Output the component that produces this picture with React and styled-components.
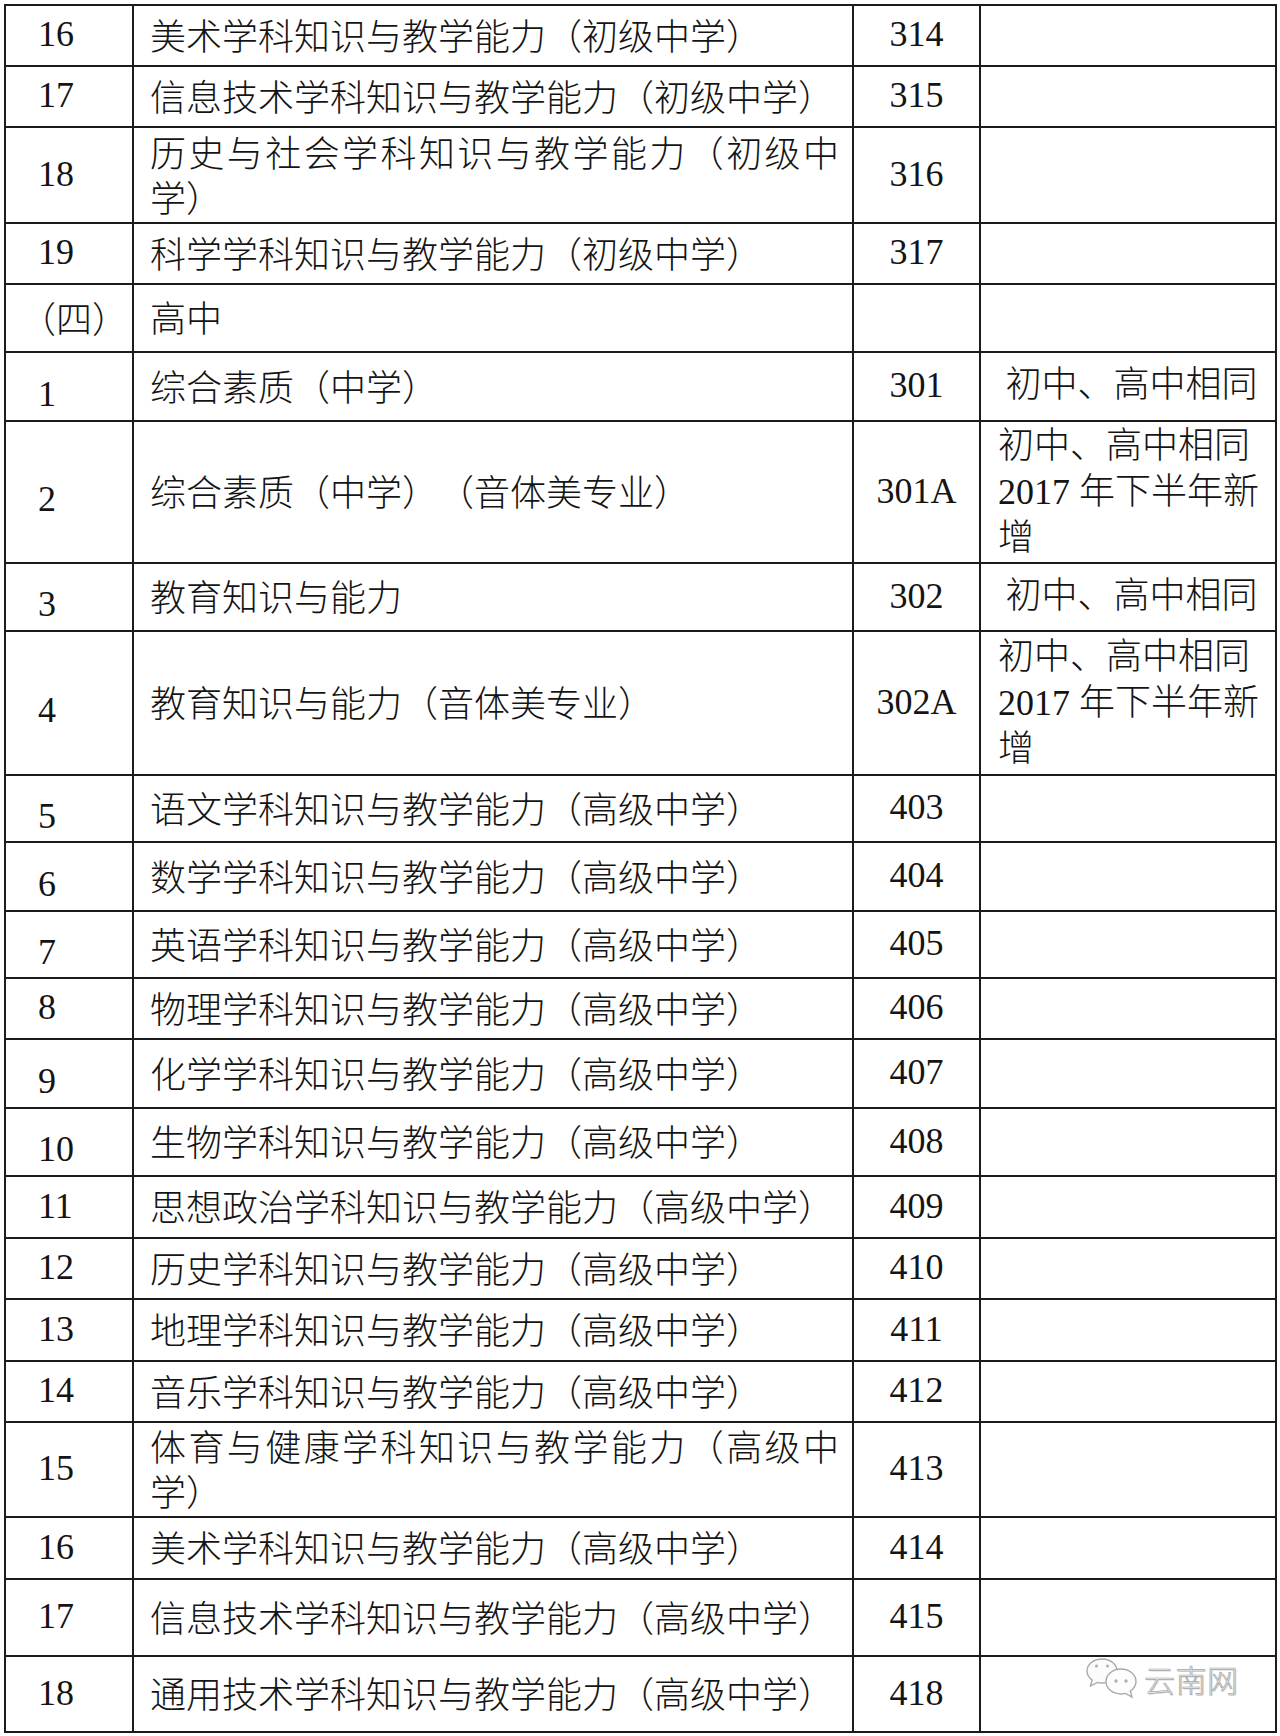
import React from 'react';
import styled, { createGlobalStyle } from 'styled-components';

const GlobalStyle = createGlobalStyle`
  html, body { margin: 0; padding: 0; background: #ffffff; }
  body { font-family: "Liberation Serif", "Noto Sans CJK SC", serif; }
`;

const Page = styled.div`
  position: relative;
  width: 1280px;
  height: 1736px;
  padding: 4px 0 0 4px;
  box-sizing: border-box;
  background: #ffffff;
  overflow: hidden;
`;

const Table = styled.table`
  border-collapse: collapse;
  table-layout: fixed;
  width: 1271px;
  font-family: "Liberation Serif", "Noto Sans CJK SC", serif;
  font-size: 36px;
  color: #141414;
  text-spacing-trim: space-all;
`;

const Col = styled.col`
  width: ${(p) => p.$w}px;
`;

const Row = styled.tr`
  height: ${(p) => p.$h}px;
`;

const Cell = styled.td`
  border: 2px solid #1c1c1c;
  padding: 0 0 3px 0;
  vertical-align: middle;
  line-height: 44px;
  box-sizing: border-box;
`;

const NumCell = styled(Cell)`
  padding-left: ${(p) => (p.$tight ? 14 : 32)}px;
  padding-top: ${(p) => (p.$drop ? 17 : 0)}px;
  white-space: nowrap;
  font-family: ${(p) => (p.$tight ? '"Noto Sans CJK SC", sans-serif' : '"Liberation Serif", serif')};
  font-weight: ${(p) => (p.$tight ? 300 : 400)};
  font-feature-settings: ${(p) => (p.$tight ? '"fwid" 1' : 'normal')};
`;

const NameCell = styled(Cell)`
  padding-left: 16px;
  padding-right: 13px;
  line-height: 45px;
  text-align: justify;
  line-break: strict;
  font-family: "Noto Sans CJK SC", sans-serif;
  font-weight: 300;
  font-feature-settings: "fwid" 1;
`;

const CodeCell = styled(Cell)`
  text-align: center;
`;

const NoteCell = styled(Cell)`
  padding-left: 17px;
  padding-right: 10px;
  padding-bottom: ${(p) => (p.$center ? 3 : 0)}px;
  text-align: ${(p) => (p.$center ? 'center' : 'left')};
  line-height: 46px;
  font-weight: 300;
`;

const NoteLine = styled.div`
  display: block;
`;

const Watermark = styled.div`
  position: absolute;
  left: 1084px;
  top: 1656px;
  display: flex;
  align-items: center;
  gap: 4px;
  pointer-events: none;
`;

const MarkText = styled.span`
  font-family: "Noto Sans CJK SC", sans-serif;
  font-size: 31px;
  font-weight: 300;
  line-height: 44px;
  color: #ececec;
  -webkit-text-stroke: 0.7px #a6a6a6;
  text-shadow: 1px 1px 0 rgba(150, 150, 150, 0.35);
  letter-spacing: 0.5px;
`;

const WeChatIcon = () => (
  <svg width="56" height="46" viewBox="0 0 56 46" fill="none">
    <path
      d="M18 3 C9.5 3 3 8.5 3 15 C3 18.6 5 21.8 8.2 24 L6.5 30 L13.5 26.4 C15 26.8 16.5 27 18 27 C26.5 27 33 21.6 33 15 C33 8.5 26.5 3 18 3 Z"
      fill="#fbfbfb"
      stroke="#a9a9a9"
      strokeWidth="1.4"
    />
    <circle cx="12.5" cy="10" r="1.6" fill="#b0b0b0" />
    <circle cx="23.5" cy="10" r="1.6" fill="#b0b0b0" />
    <path
      d="M37 13 C28.5 13 22 18.6 22 25.5 C22 32.4 28.5 38 37 38 C38.5 38 40 37.8 41.4 37.4 L48 41 L46.3 35 C49.8 32.8 52 29.4 52 25.5 C52 18.6 45.5 13 37 13 Z"
      fill="#fdfdfd"
      stroke="#a9a9a9"
      strokeWidth="1.4"
    />
    <circle cx="32" cy="25" r="1.7" fill="#b0b0b0" />
    <circle cx="42" cy="25" r="1.7" fill="#b0b0b0" />
  </svg>
);

const rows = [
  { n: '16', t: '美术学科知识与教学能力（初级中学）', c: '314', h: 61 },
  { n: '17', t: '信息技术学科知识与教学能力（初级中学）', c: '315', h: 61 },
  { n: '18', t: '历史与社会学科知识与教学能力（初级中学）', c: '316', h: 96 },
  { n: '19', t: '科学学科知识与教学能力（初级中学）', c: '317', h: 61 },
  { n: '（四）', t: '高中', c: '', h: 68, tight: true },
  { n: '1', t: '综合素质（中学）', c: '301', note: ['初中、高中相同'], center: true, h: 69, drop: true },
  { n: '2', t: '综合素质（中学）（音体美专业）', c: '301A', note: ['初中、高中相同', '2017 年下半年新增'], h: 142, drop: true },
  { n: '3', t: '教育知识与能力', c: '302', note: ['初中、高中相同'], center: true, h: 68, drop: true },
  { n: '4', t: '教育知识与能力（音体美专业）', c: '302A', note: ['初中、高中相同', '2017 年下半年新增'], h: 144, drop: true },
  { n: '5', t: '语文学科知识与教学能力（高级中学）', c: '403', h: 67, drop: true },
  { n: '6', t: '数学学科知识与教学能力（高级中学）', c: '404', h: 69, drop: true },
  { n: '7', t: '英语学科知识与教学能力（高级中学）', c: '405', h: 67, drop: true },
  { n: '8', t: '物理学科知识与教学能力（高级中学）', c: '406', h: 61 },
  { n: '9', t: '化学学科知识与教学能力（高级中学）', c: '407', h: 69, drop: true },
  { n: '10', t: '生物学科知识与教学能力（高级中学）', c: '408', h: 68, drop: true },
  { n: '11', t: '思想政治学科知识与教学能力（高级中学）', c: '409', h: 62 },
  { n: '12', t: '历史学科知识与教学能力（高级中学）', c: '410', h: 61 },
  { n: '13', t: '地理学科知识与教学能力（高级中学）', c: '411', h: 62 },
  { n: '14', t: '音乐学科知识与教学能力（高级中学）', c: '412', h: 61 },
  { n: '15', t: '体育与健康学科知识与教学能力（高级中学）', c: '413', h: 95 },
  { n: '16', t: '美术学科知识与教学能力（高级中学）', c: '414', h: 62 },
  { n: '17', t: '信息技术学科知识与教学能力（高级中学）', c: '415', h: 77 },
  { n: '18', t: '通用技术学科知识与教学能力（高级中学）', c: '418', h: 76 },
];

export default function App() {
  return (
    <>
      <GlobalStyle />
      <Page lang="zh-CN">
        <Table>
          <colgroup>
            <Col $w={128} />
            <Col $w={720} />
            <Col $w={127} />
            <Col $w={296} />
          </colgroup>
          <tbody>
            {rows.map((r, i) => (
              <Row key={i} $h={r.h}>
                <NumCell $tight={r.tight} $drop={r.drop}>{r.n}</NumCell>
                <NameCell>{r.t}</NameCell>
                <CodeCell>{r.c}</CodeCell>
                <NoteCell $center={r.center}>
                  {r.note && r.note.map((line, j) => <NoteLine key={j}>{line}</NoteLine>)}
                </NoteCell>
              </Row>
            ))}
          </tbody>
        </Table>
        <Watermark>
          <WeChatIcon />
          <MarkText>云南网</MarkText>
        </Watermark>
      </Page>
    </>
  );
}
